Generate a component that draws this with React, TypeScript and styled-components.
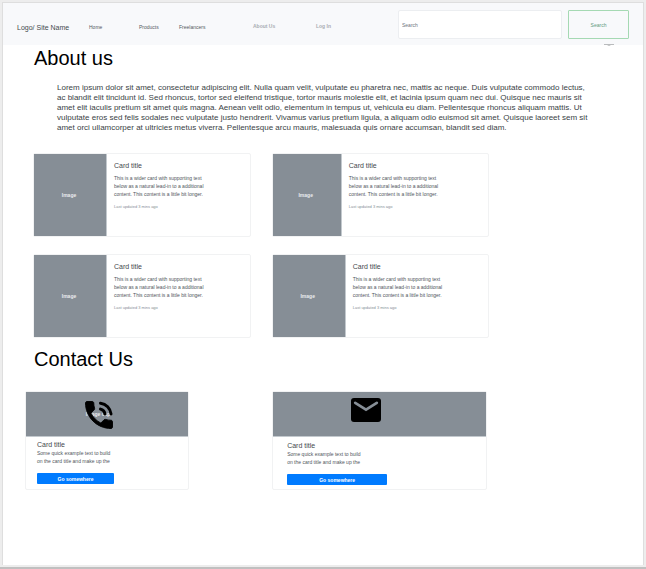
import React from "react";
import styled, { createGlobalStyle } from "styled-components";

const GlobalStyle = createGlobalStyle`
  *, *::before, *::after { box-sizing: border-box; }
  body {
    margin: 0;
    background: #ededed;
    color: #333a40;
    font-family: "Liberation Sans", Arial, sans-serif;
    font-size: 5px;
  }
  h1, h2, h3, p { margin: 0; font-weight: 400; }
  button, input { font-family: inherit; }
`;

const Shell = styled.div`
  min-height: 100vh;
  display: flex;
  flex-direction: column;
  padding: 2px 2px 2px;
  border-bottom: 2px solid #c0c0c0;
`;

const Page = styled.div`
  flex: 1;
  background: #fff;
  border: 1px solid #dedede;
  border-width: 1px 1px 0;
`;

const Header = styled.header`
  position: relative;
  display: grid;
  grid-template-columns: 72fr 164fr 145fr 164fr 67fr;
  height: 42px;
  padding: 7px 14px 6px;
  background: #f8f9fb;
`;

const HeaderMark = styled.svg`
  position: absolute;
  right: 29px;
  bottom: -1px;
  width: 10px;
  height: 2px;
`;

const Brand = styled.a`
  padding-top: 13px;
  font-size: 7px;
  line-height: 10px;
  color: #44494e;
  text-decoration: none;
  white-space: nowrap;
`;

const Nav = styled.nav<{ $columns: string; $muted?: boolean }>`
  display: grid;
  grid-template-columns: ${(p) => p.$columns};
  align-content: start;
  padding-top: ${(p) => (p.$muted ? 12 : 13)}px;
  color: ${(p) => (p.$muted ? "#a9adb3" : "#55595f")};
  font-weight: ${(p) => (p.$muted ? 700 : 400)};
`;

const NavLink = styled.a`
  color: inherit;
  text-decoration: none;
  font-size: 5px;
  line-height: 8px;
  white-space: nowrap;
`;

const SearchInput = styled.input`
  width: 100%;
  min-width: 0;
  height: 100%;
  padding: 0 3px;
  border: 1px solid #eceef1;
  border-radius: 2px;
  background: #fff;
  font-size: 5px;
  &::placeholder { color: #6c757d; opacity: 1; }
`;

const SearchButton = styled.button`
  margin-left: 6px;
  padding: 0;
  border: 1px solid #a5d9b3;
  border-radius: 1px;
  background: transparent;
  color: #5f9a80;
  font-size: 5px;
`;

const Main = styled.main`
  padding-top: 1px;
`;

const SectionTitle = styled.h1`
  padding-left: 31px;
  font-size: 20px;
  line-height: 24px;
  color: #000;
`;

const Intro = styled.p`
  padding: 13px 0 0 54px;
  font-size: 8px;
  line-height: 10px;
  color: #3a3f45;
  white-space: pre-line;
`;

const InfoGrid = styled.div`
  display: grid;
  grid-template-columns: 1fr 1fr;
  gap: 17px 21px;
  padding: 20px 24% 9px 30px;
`;

const InfoCard = styled.article`
  display: flex;
  height: 84px;
  border: 1px solid #f1f2f3;
  border-radius: 2px;
`;

const Picture = styled.div<{ $narrow?: boolean }>`
  flex: 0 0 ${(p) => (p.$narrow ? 69 : 73)}px;
  display: grid;
  place-items: center;
  padding-right: 2px;
  border-right: 1px solid #c3c9ce;
  background: #868e96;
  color: #e9ecef;
  font-weight: 700;
  line-height: 8px;
`;

const InfoBody = styled.div`
  padding: 7px;
  white-space: nowrap;
`;

const CardTitle = styled.h3`
  font-size: 7px;
  line-height: 9px;
  color: #44494e;
`;

const CardText = styled.p`
  line-height: 8px;
  color: #50565c;
  white-space: pre-line;
`;

const InfoText = styled(CardText)`
  padding-top: 4px;
`;

const Updated = styled.p`
  padding-top: 6px;
  font-size: 4px;
  line-height: 6px;
  color: #868e96;
`;

const ContactGrid = styled.div`
  display: grid;
  grid-template-columns: 164fr 215fr;
  gap: 83px;
  padding: 20px calc(24% + 2px) 20px 22px;
`;

const ContactCard = styled.article`
  border: 1px solid #f1f2f3;
  border-radius: 2px;
`;

const Banner = styled.div`
  position: relative;
  display: grid;
  place-items: center;
  height: 45px;
  padding-right: 18px;
  border-bottom: 1px solid #c3c9ce;
  background: #868e96;
  color: #e9ecef;
  font-weight: 700;
`;

const BannerIcon = styled.svg<{ $left: number; $top: number }>`
  position: absolute;
  left: ${(p) => p.$left}px;
  top: ${(p) => p.$top}px;
  width: 36px;
  height: 36px;
`;

const ContactBody = styled.div<{ $wide?: boolean }>`
  padding: ${(p) => (p.$wide ? "4px 14px 4px" : "3px 11px 5px")};
`;

const Action = styled.button<{ $width: number }>`
  display: block;
  width: ${(p) => p.$width}px;
  height: 11px;
  margin-top: 8px;
  padding: 0;
  border: 0;
  border-radius: 1px;
  background: #007bff;
  color: #fff;
  font-size: 5px;
  font-weight: 700;
`;

const infoCards = [false, true, false, false];

export default function App() {
  return (
    <>
      <GlobalStyle />
      <Shell>
        <Page>
          <Header>
            <Brand href="#">Logo/ Site Name</Brand>
            <Nav $columns="50fr 40fr 74fr">
              <NavLink href="#">Home</NavLink>
              <NavLink href="#">Products</NavLink>
              <NavLink href="#">Freelancers</NavLink>
            </Nav>
            <Nav $columns="63fr 82fr" $muted>
              <NavLink href="#">About Us</NavLink>
              <NavLink href="#">Log In</NavLink>
            </Nav>
            <SearchInput aria-label="Search" placeholder="Search" />
            <SearchButton>Search</SearchButton>
            <HeaderMark viewBox="0 0 10 2" aria-hidden="true">
              <path d="M0 0H10V1H7L5 2L3 1H0Z" fill="#b9bbbd" />
            </HeaderMark>
          </Header>
          <Main>
            <SectionTitle>About us</SectionTitle>
            <Intro>
              {`Lorem ipsum dolor sit amet, consectetur adipiscing elit. Nulla quam velit, vulputate eu pharetra nec, mattis ac neque. Duis vulputate commodo lectus,
ac blandit elit tincidunt id. Sed rhoncus, tortor sed eleifend tristique, tortor mauris molestie elit, et lacinia ipsum quam nec dui. Quisque nec mauris sit
amet elit iaculis pretium sit amet quis magna. Aenean velit odio, elementum in tempus ut, vehicula eu diam. Pellentesque rhoncus aliquam mattis. Ut
vulputate eros sed felis sodales nec vulputate justo hendrerit. Vivamus varius pretium ligula, a aliquam odio euismod sit amet. Quisque laoreet sem sit
amet orci ullamcorper at ultricies metus viverra. Pellentesque arcu mauris, malesuada quis ornare accumsan, blandit sed diam.`}
            </Intro>
            <InfoGrid>
              {infoCards.map((narrow, i) => (
                <InfoCard key={i}>
                  <Picture $narrow={narrow}>Image</Picture>
                  <InfoBody>
                    <CardTitle>Card title</CardTitle>
                    <InfoText>
                      {`This is a wider card with supporting text
below as a natural lead-in to a additional
content. This content is a little bit longer.`}
                    </InfoText>
                    <Updated>Last updated 3 mins ago</Updated>
                  </InfoBody>
                </InfoCard>
              ))}
            </InfoGrid>
            <SectionTitle as="h2">Contact Us</SectionTitle>
            <ContactGrid>
              <ContactCard>
                <Banner>
                  Image cap
                  <BannerIcon $left={55} $top={5} viewBox="0 0 24 24" aria-hidden="true">
                    <path
                      d="M20 15.5c-1.25 0-2.45-.2-3.57-.57-.35-.11-.74-.03-1.02.24l-2.2 2.2c-2.83-1.44-5.15-3.75-6.59-6.59l2.2-2.21c.28-.26.36-.65.25-1C8.7 6.45 8.5 5.25 8.5 4c0-.55-.45-1-1-1H4c-.55 0-1 .45-1 1 0 9.39 7.61 17 17 17 .55 0 1-.45 1-1v-3.5c0-.55-.45-1-1-1z"
                      stroke="#000"
                      strokeWidth="0.6"
                      strokeLinejoin="round"
                    />
                    <path
                      d="M13 4.1a8 8 0 0 1 7 7.2M13 8.1a4 4 0 0 1 3 3.2"
                      fill="none"
                      stroke="#000"
                      strokeWidth="2"
                      strokeLinecap="round"
                    />
                  </BannerIcon>
                </Banner>
                <ContactBody>
                  <CardTitle>Card title</CardTitle>
                  <CardText>
                    {`Some quick example text to build
on the card title and make up the`}
                  </CardText>
                  <Action $width={77}>Go somewhere</Action>
                </ContactBody>
              </ContactCard>
              <ContactCard>
                <Banner>
                  <BannerIcon $left={75} $top={0} viewBox="0 0 24 24" aria-hidden="true">
                    <rect x="2" y="4" width="20" height="16" rx="2" />
                    <path
                      d="M4.8 7.2L12 11.7l7.2-4.5"
                      fill="none"
                      stroke="#868e96"
                      strokeWidth="1.8"
                      strokeLinecap="round"
                    />
                  </BannerIcon>
                </Banner>
                <ContactBody $wide>
                  <CardTitle>Card title</CardTitle>
                  <CardText>
                    {`Some quick example text to build
on the card title and make up the`}
                  </CardText>
                  <Action $width={100}>Go somewhere</Action>
                </ContactBody>
              </ContactCard>
            </ContactGrid>
          </Main>
        </Page>
      </Shell>
    </>
  );
}
